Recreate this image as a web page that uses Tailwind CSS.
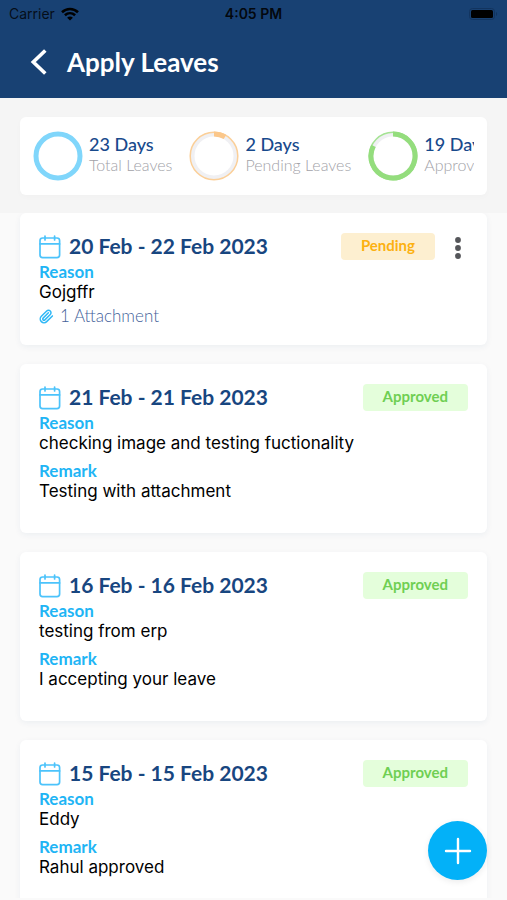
<!DOCTYPE html>
<html lang="en">
<head>
<meta charset="utf-8">
<meta name="viewport" content="width=device-width, initial-scale=1">
<title>Apply Leaves</title>
<script src="https://cdn.jsdelivr.net/npm/@tailwindcss/browser@4"></script>
</head>
<body class="bg-[#fafafa] font-['Inter',sans-serif] text-black">
<svg class="hidden" aria-hidden="true">
  <symbol id="calendar" viewBox="0 0 22 24">
    <g fill="none" stroke="#4cc3fb" stroke-width="1.7" stroke-linecap="round">
      <rect x="1" y="3" width="19.6" height="19.6" rx="2.6"/>
      <path d="M1 8.9h19.6M6 1v4M15.6 1v4"/>
    </g>
  </symbol>
</svg>
<div class="flex h-screen flex-col">
  <header class="shrink-0 bg-[#184173]">
    <div class="grid h-[27px] grid-cols-3 items-center px-[9px] text-[14px]">
      <div class="flex items-center gap-1.5 text-black/80">
        <span>Carrier</span>
        <svg class="h-[14px] w-[18px]" viewBox="0 0 18 14" fill="none" stroke="#000" stroke-width="2.6" aria-hidden="true">
          <path d="M1 5.2C5.6.9 12.4.9 17 5.2M3.9 8.300c3-2.700 7.200-2.700 10.200 0"/>
          <path d="M9 13.600 6.100 10.700c1.700-1.500 4.100-1.500 5.800 0Z" fill="#000" stroke="none"/>
        </svg>
      </div>
      <span class="text-center font-semibold whitespace-nowrap text-black/90">4:05 PM</span>
      <svg class="h-3 w-[29px] justify-self-end" viewBox="0 0 29 12" aria-hidden="true">
        <rect x=".5" y=".5" width="25" height="11" rx="3" fill="none" stroke="#12345f"/>
        <rect x="2" y="2" width="22" height="8" rx="1.500" fill="#000"/>
        <path d="M27 4v4c1.500-.7 1.500-3.300 0-4Z" fill="#12345f"/>
      </svg>
    </div>
    <div class="flex h-[71px] items-center gap-5 px-[30px] pb-0.5">
      <button type="button" aria-label="Back" class="flex h-7 w-[17px] items-center">
        <svg class="h-7 w-[17px]" viewBox="0 0 17 28" fill="none" stroke="#fff" stroke-width="3.600"><path d="M15.300 2.500 3.300 14l12 11.500"/></svg>
      </button>
      <h1 class="font-['Lato',sans-serif] text-[26px] leading-8 font-bold text-white">Apply Leaves</h1>
    </div>
  </header>

  <section aria-label="Leave summary" class="shrink-0 bg-[#f5f5f5] px-5 pt-[19px] pb-[18px]">
    <div class="rounded-md bg-white px-[13px] py-[14px] shadow-[0_2px_6px_rgba(0,0,0,0.02)]">
      <ul class="flex gap-[17px] overflow-hidden whitespace-nowrap">
        <li class="flex shrink-0 items-center gap-1.5">
          <svg class="size-[50px]" viewBox="0 0 50 50" fill="none" aria-hidden="true"><circle cx="25" cy="25" r="22" stroke="#80d6fb" stroke-width="5"/></svg>
          <div class="pb-1">
            <p class="font-['Lato',sans-serif] text-[18px] leading-[22px] font-medium text-[#184a8c]">23 Days</p>
            <p class="font-['Lato',sans-serif] text-[16px] leading-5 font-light text-[#a2a2a8]">Total Leaves</p>
          </div>
        </li>
        <li class="flex shrink-0 items-center gap-1.5">
          <svg class="size-[50px]" viewBox="0 0 50 50" fill="none" aria-hidden="true">
            <circle cx="25" cy="25" r="21.500" stroke="#f0f0f3" stroke-width="4"/>
            <circle cx="25" cy="25" r="23.800" stroke="#fbcf98" stroke-width="1.500"/>
            <path d="M25 3A22 22 0 0 1 36 5.950" stroke="#fbc78a" stroke-width="5"/>
          </svg>
          <div class="pb-1">
            <p class="font-['Lato',sans-serif] text-[18px] leading-[22px] font-medium text-[#184a8c]">2 Days</p>
            <p class="font-['Lato',sans-serif] text-[16px] leading-5 font-light text-[#a2a2a8]">Pending Leaves</p>
          </div>
        </li>
        <li class="flex shrink-0 items-center gap-1.5">
          <svg class="size-[50px]" viewBox="0 0 50 50" fill="none" aria-hidden="true">
            <circle cx="25" cy="25" r="21.500" stroke="#f0f0f3" stroke-width="4"/>
            <circle cx="25" cy="25" r="23.800" stroke="#a5e394" stroke-width="1.500"/>
            <path d="M25 3A22 22 0 1 1 5.500 14.800" stroke="#94dd7d" stroke-width="5"/>
          </svg>
          <div class="pb-1">
            <p class="font-['Lato',sans-serif] text-[18px] leading-[22px] font-medium text-[#184a8c]">19 Days</p>
            <p class="font-['Lato',sans-serif] text-[16px] leading-5 font-light text-[#a2a2a8]">Approved Leaves</p>
          </div>
        </li>
      </ul>
    </div>
  </section>

  <main class="mb-0.5 min-h-0 flex-1 overflow-hidden px-5">
    <div class="flex flex-col gap-[19px] text-[17px] leading-5">
      <article class="rounded-md bg-white px-[19px] pt-5 pb-[19px] shadow-[0_2px_6px_rgba(24,65,115,0.06)]">
        <div class="flex h-[27px] items-start">
          <svg class="mt-0.5 mr-2 h-6 w-[22px]" aria-hidden="true"><use href="#calendar"/></svg>
          <h2 class="font-['Lato',sans-serif] text-[21px] leading-[26px] font-bold text-[#184680]">20 Feb - 22 Feb 2023</h2>
          <span class="ml-auto rounded-sm bg-[#fdefd0] px-5 pb-0.5 font-['Lato',sans-serif] text-[15px] leading-[25px] font-bold text-[#fcb111]">Pending</span>
          <button type="button" aria-label="More options" class="mt-0.5 ml-[13px] flex h-6 w-5 justify-center">
            <svg class="h-6 w-1.5" viewBox="0 0 6 24" fill="#55565a"><circle cx="3" cy="5" r="2.900"/><circle cx="3" cy="13" r="2.900"/><circle cx="3" cy="21" r="2.900"/></svg>
          </button>
        </div>
        <h3 class="mt-0.5 font-['Lato',sans-serif] font-bold text-[#1fb5f5]">Reason</h3>
        <p>Gojgffr</p>
        <a href="#" class="mt-1 flex items-center gap-1.5 font-['Lato',sans-serif] font-light text-[#44629a]">
          <svg class="size-[15px]" viewBox="0 0 24 24" fill="none" stroke="#2fb8f6" stroke-width="2.400" stroke-linecap="round" stroke-linejoin="round" aria-hidden="true"><path d="m21.440 11.050-9.190 9.190a6 6 0 0 1-8.490-8.490l8.570-8.570A4 4 0 1 1 18 8.840l-8.590 8.570a2 2 0 0 1-2.830-2.830l8.490-8.480"/></svg>
          1 Attachment
        </a>
      </article>

      <article class="rounded-md bg-white px-[19px] pt-5 pb-8 shadow-[0_2px_6px_rgba(24,65,115,0.06)]">
        <div class="flex h-[27px] items-start">
          <svg class="mt-0.5 mr-2 h-6 w-[22px]" aria-hidden="true"><use href="#calendar"/></svg>
          <h2 class="font-['Lato',sans-serif] text-[21px] leading-[26px] font-bold text-[#184680]">21 Feb - 21 Feb 2023</h2>
          <span class="ml-auto rounded-sm bg-[#e4fedb] px-5 pb-0.5 font-['Lato',sans-serif] text-[15px] leading-[25px] font-bold text-[#6fcf53]">Approved</span>
        </div>
        <h3 class="mt-0.5 font-['Lato',sans-serif] font-bold text-[#1fb5f5]">Reason</h3>
        <p>checking image and testing fuctionality</p>
        <h3 class="mt-2 font-['Lato',sans-serif] font-bold text-[#1fb5f5]">Remark</h3>
        <p>Testing with attachment</p>
      </article>

      <article class="rounded-md bg-white px-[19px] pt-5 pb-8 shadow-[0_2px_6px_rgba(24,65,115,0.06)]">
        <div class="flex h-[27px] items-start">
          <svg class="mt-0.5 mr-2 h-6 w-[22px]" aria-hidden="true"><use href="#calendar"/></svg>
          <h2 class="font-['Lato',sans-serif] text-[21px] leading-[26px] font-bold text-[#184680]">16 Feb - 16 Feb 2023</h2>
          <span class="ml-auto rounded-sm bg-[#e4fedb] px-5 pb-0.5 font-['Lato',sans-serif] text-[15px] leading-[25px] font-bold text-[#6fcf53]">Approved</span>
        </div>
        <h3 class="mt-0.5 font-['Lato',sans-serif] font-bold text-[#1fb5f5]">Reason</h3>
        <p>testing from erp</p>
        <h3 class="mt-2 font-['Lato',sans-serif] font-bold text-[#1fb5f5]">Remark</h3>
        <p>I accepting your leave</p>
      </article>

      <article class="rounded-md bg-white px-[19px] pt-5 pb-8 shadow-[0_2px_6px_rgba(24,65,115,0.06)]">
        <div class="flex h-[27px] items-start">
          <svg class="mt-0.5 mr-2 h-6 w-[22px]" aria-hidden="true"><use href="#calendar"/></svg>
          <h2 class="font-['Lato',sans-serif] text-[21px] leading-[26px] font-bold text-[#184680]">15 Feb - 15 Feb 2023</h2>
          <span class="ml-auto rounded-sm bg-[#e4fedb] px-5 pb-0.5 font-['Lato',sans-serif] text-[15px] leading-[25px] font-bold text-[#6fcf53]">Approved</span>
        </div>
        <h3 class="mt-0.5 font-['Lato',sans-serif] font-bold text-[#1fb5f5]">Reason</h3>
        <p>Eddy</p>
        <h3 class="mt-2 font-['Lato',sans-serif] font-bold text-[#1fb5f5]">Remark</h3>
        <p>Rahul approved</p>
      </article>
    </div>
  </main>
</div>
<button type="button" aria-label="Apply for leave" class="fixed right-5 bottom-5 flex size-[59px] items-center justify-center rounded-full bg-[#03b1f8] shadow-[0_2px_6px_rgba(0,0,0,0.08)]">
  <svg class="size-7" viewBox="0 0 28 28" stroke="#fff" stroke-width="2.400" stroke-linecap="round"><path d="M14 2v24M2 14h24"/></svg>
</button>
</body>
</html>
